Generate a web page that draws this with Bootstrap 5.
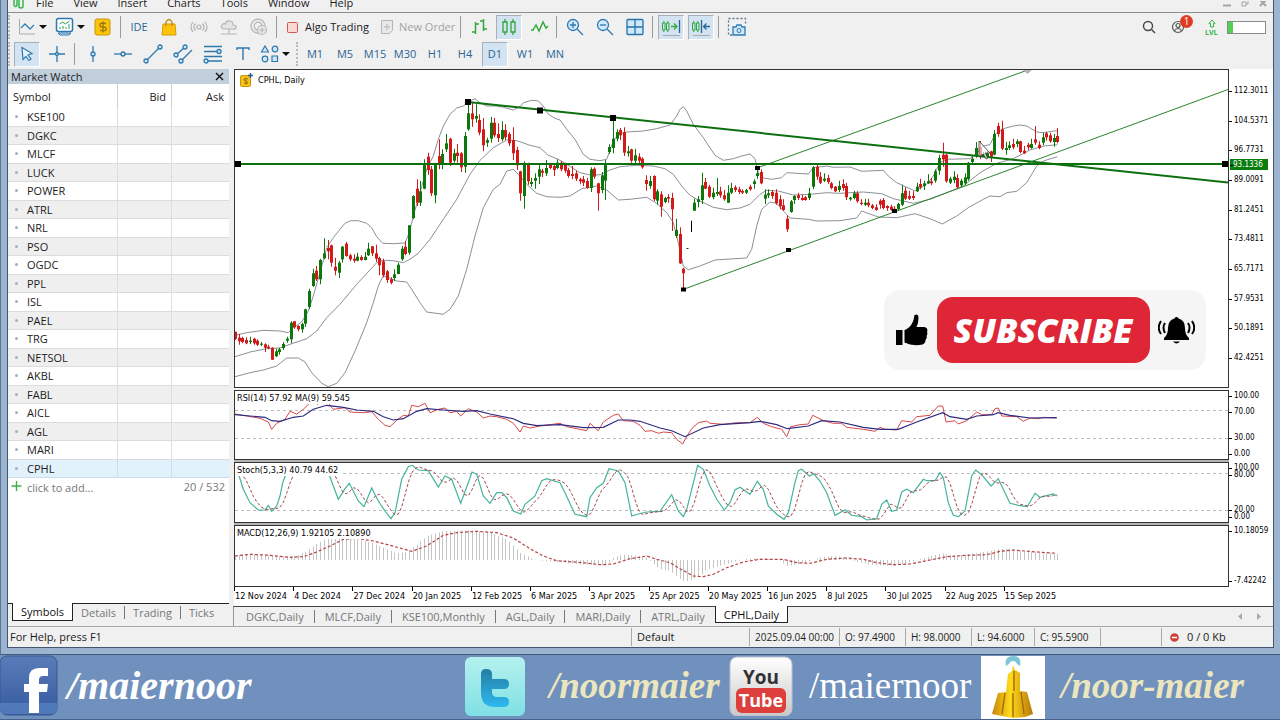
<!DOCTYPE html>
<html lang="en">
<head>
<meta charset="utf-8">
<meta name="viewport" content="width=device-width, initial-scale=1">
<title>CPHL, Daily</title>
<link href="https://cdn.jsdelivr.net/npm/bootstrap@5.3.0/dist/css/bootstrap.min.css" rel="stylesheet">
<style>
  body { background: #7091bd; font: 11px/16px "Open Sans", "Noto Sans", sans-serif; color: #1c1c1c; }
  button { font: inherit; color: inherit; background: none; border: 0; padding: 0; }
  a { color: inherit; text-decoration: none; }
  svg { display: block; }
  .frame { background: #9db4d0; padding: 0 6px 6px; border-left: 1px solid #5c7596; border-bottom: 1px solid #41597a; }
  .app { background: #f0f0f0; border: 1px solid #44566e; border-top: 0; }
  .menubar { height: 13px; border-bottom: 1px solid #8e8e8e; padding-left: 4px; }
  .menubar a { line-height: 20px; height: 19px; }
  .menus { gap: 20px; padding-left: 12px; }
  .wincontrols { gap: 10px; padding-right: 6px; color: #a0a0a0; }
  .tools { gap: 4px; height: 28px; }
  .tools.second { height: 28px; padding-bottom: 2px; }
  .grip { width: 2px; height: 24px; border-left: 2px dotted #b9b9b9; }
  .rule { width: 1px; height: 22px; margin: 0 1px 0 0; background: #9a9a9a; }
  .tool { width: 26px; height: 25px; display: flex; align-items: center; justify-content: center; color: #2a6596; flex: none; }
  .tool.drop { width: 34px; justify-content: flex-start; padding-left: 3px; gap: 2px; }
  .tool.drop.tight { width: 32px; padding-left: 0; }
  .tool.on { background: #d3e3f1; border: 1px solid #fff; border-top-color: #a6b0ba; border-left-color: #a6b0ba; }
  .tool svg, .wide svg { flex: none; }
  .caret { width: 0; border: 4px solid transparent; border-top-color: #111; border-bottom: 0; }
  .wide { display: flex; align-items: center; gap: 7px; white-space: nowrap; }
  .algo { width: 88px; padding-left: 5px; }
  .order { width: 82px; padding-left: 6px; gap: 5px; color: #a3a3a3; }
  .status-tools { gap: 14px; padding-right: 7px; }
  .strength { gap: 8px; }
  .alert-dot { left: 9px; top: -4px; width: 13px; height: 13px; border-radius: 50%; background: #e03a22; color: #fff; font-size: 10px; line-height: 13px; text-align: center; }
  .level { width: 39px; height: 13px; border: 1px solid #8a8a8a; background: #fff; }
  .level i { display: block; width: 5px; height: 11px; background: #52d152; }
  .watch { width: 221px; background: #fff; flex: none; }
  .watch-head { background: #c1cedb; height: 15px; padding: 0 5px 0 3px; line-height: 15px; }
  .quotes { width: 100%; table-layout: fixed; border-collapse: separate; border-spacing: 0; }
  .quotes th { height: 24px; padding: 2px 5px 0; font-weight: 400; border-right: 1px solid #d0d0d0; }
  .quotes td { height: 19px; padding: 0 0 0 19px; line-height: 16px; border-right: 1px solid #dedede; border-bottom: 1px solid #dcdcdc; position: relative; }
  .quotes tr:nth-child(even) td { height: 18px; background: #efefef; }
  .quotes th:last-child, .quotes td:last-child { border-right: 0; }
  .quotes tbody tr.picked td { background: #e2f2fd; border-color: #c9dfee; }
  .quotes td:first-child::before { content: ""; position: absolute; left: 7px; top: 7px; width: 3px; height: 3px; border-radius: 50%; background: #a3afba; }
  .quotes .c1 { width: 110px; } .quotes .c2 { width: 54px; }
  .adder { color: #777; padding: 1px 4px 0 3px; height: 19px; }
  .side-tabs { background: #f0f0f0; border-top: 1px solid #222; height: 23px; padding-left: 4px; color: #777; }
  .side-tabs button { height: 17px; line-height: 16px; padding: 0 8px; }
  .side-tabs button + button + button { border-left: 1px solid #777; height: 13px; line-height: 12px; margin-top: 2px; }
  .side-tabs button.current { background: #fff; color: #111; border: 1px solid #222; border-top: 0; height: 18px; margin-top: -1px; }
  .chart { margin-left: 5px; background: #fff; min-width: 0; font: 9px/12px "DejaVu Sans Condensed", "DejaVu Sans", sans-serif; color: #000; }
  .plot { border: 1px solid #333; min-width: 0; position: relative; flex: 1 1 0; }
  .plot > svg { width: 100%; }
  .scale { width: 44px; flex: none; display: flex; flex-direction: column; justify-content: space-between; position: relative; font-size: 8px; }
  .scale span { padding-left: 5px; position: relative; white-space: nowrap; }
  .scale span::before { content: ""; position: absolute; left: 0; top: 6px; width: 3px; height: 1px; background: #000; }
  .scale.main { padding: 16px 0 24px; }
  .scale .now { position: absolute; left: 1px; top: 90px; width: 38px; height: 11px; line-height: 11px; background: #0b7d0f; color: #fff; padding-left: 3px; }
  .scale.rsi span:nth-child(even) { margin-top: -9px; }
  .scale .pair span + span { margin-top: -5px; }
  .pane-gap { height: 2px; margin-right: 44px; background: #b5b5b5; }
  .pane-gap.light { background: #f4f4f4; }
  .pane-title { position: absolute; left: 0; top: 1px; padding: 0 2px; background: #fff; }
  .chart-title { position: absolute; left: 5px; top: 3px; gap: 5px; white-space: nowrap; }
  .dates { height: 19px; overflow: hidden; }
  .dates span { flex: 0 0 5.7%; border-left: 1px solid #000; height: 4px; white-space: nowrap; }
  .dates b { display: block; font-weight: 400; padding-top: 3px; }
  .cta { right: 22px; bottom: 17px; width: 322px; height: 80px; border-radius: 16px; background: #f5f5f5; padding: 0 11px; }
  .cta svg { flex: none; }
  .subscribe { width: 213px; height: 66px; flex: none; border-radius: 16px; background: #de2637; color: #fff; font: italic 800 34px/66px "Open Sans", sans-serif; text-align: center; }
  .chart-tabs { margin-left: 4px; border-top: 1px solid #444; border-left: 1px solid #999; height: 20px; color: #777; background: #f0f0f0; padding-left: 2px; }
  .chart-tabs button { padding: 0 10px; height: 13px; line-height: 12px; margin-top: 3px; border-right: 1px solid #777; white-space: nowrap; }
  .chart-tabs button.nearlast { border: 0; }
  .chart-tabs button.current { height: 17px; line-height: 17px; margin-top: -1px; padding: 0 8px; background: #fff; color: #111; border: 1px solid #222; border-top: 0; }
  .work, .hint { min-width: 0; }
  .statusbar { border-top: 1px solid #a8a8a8; height: 21px; line-height: 19px; }
  .hint { padding-left: 2px; }
  .statusbar > span { border-left: 1px solid #a8a8a8; margin: 1px 0; padding-left: 5px; white-space: nowrap; flex: none; line-height: 18px; }
  .statusbar .data { font-size: 10px; }
  .w118 { width: 118px; } .w90 { width: 90px; } .w66 { width: 66px; } .w63 { width: 63px; } .w61 { width: 61px; } .w112 { width: 112px; }
  .social { display: grid; grid-template-columns: 465fr 264fr 252fr 299fr; height: 65px; border-bottom: 1px solid #47628a; }
  .social a { display: flex; gap: 16px; white-space: nowrap; font: 37px/62px "Liberation Serif", serif; color: #fff; overflow: hidden; }
  .social a.fb { gap: 9px; font-size: 40px; }
  .social a.tw { gap: 24px; }
  .social .cream { color: #ebe6bd; }
  .social svg { flex: none; }
  .heavy { font-weight: 700; font-style: italic; }
</style>
</head>
<body>
<div class="frame">
<div class="app">
  <header>
    <nav class="menubar d-flex align-items-end">
      <svg width="12" height="12" viewBox="0 0 12 12" fill="none" stroke="#35b84b" stroke-width="1.5"><path d="M2 0v5q1 3 3 0V0M7 0v7q2 2 4 0V0"/></svg>
      <div class="menus d-flex">
        <a href="#">File</a><a href="#">View</a><a href="#">Insert</a><a href="#">Charts</a><a href="#">Tools</a><a href="#">Window</a><a href="#">Help</a>
      </div>
      <div class="wincontrols d-flex ms-auto">
        <svg width="8" height="11" viewBox="0 0 8 11"><path d="M0 4.500h8" stroke="#a5a5a5" stroke-width="2"/></svg>
        <svg width="8" height="11" viewBox="0 0 8 11" fill="none" stroke="#a5a5a5"><path d="M1 1h4v4H1zM3-1h4v4H5"/></svg>
        <svg width="8" height="11" viewBox="0 0 8 11" stroke="#a5a5a5" stroke-width="2"><path d="M1-1l6 6M7-1L1 5"/></svg>
      </div>
    </nav>
    <div class="tools d-flex align-items-center">
      <i class="grip"></i>
      <button class="tool drop" aria-label="Line chart"><svg width="20" height="20" fill="none"><path d="M2.500 2v15H18" stroke="#aaa"/><path d="M4 11l4-4 5 5 4-4" stroke="#3181ba" stroke-width="1.300"/></svg><i class="caret"></i></button>
      <button class="tool drop" aria-label="Indicators"><svg width="20" height="20" fill="none" stroke="#2d79ae"><rect x="1.500" y="1.500" width="16" height="13" rx="2" fill="#fff" stroke-width="1.500"/><path d="M3 16h13l-2 2H5z" fill="#c9e6fb"/><path d="M4.500 7l3-2 3 2 4-3M5 12v-2m3 2V9m3 3v-2m3 2V7" stroke="#2c9e5a"/></svg><i class="caret"></i></button>
      <button class="tool" aria-label="Market"><svg width="20" height="20"><rect x="2" y="2" width="15" height="16" rx="2" fill="#fbc50b" stroke="#c9960c"/><path d="M13 7q-3-2-6 0-1 3 3 3t3 3q-3 2-6 0M10 4.500v11" fill="none" stroke="#9c7508" stroke-width="1.300"/></svg></button>
      <i class="rule"></i>
      <button class="tool">IDE</button>
      <button class="tool" aria-label="Store"><svg width="20" height="20"><path d="M4 7h12l1 11H3z" fill="#fcc20c" stroke="#d79a08"/><path d="M7 9V5q3-5 6 0v4" fill="none" stroke="#bd8912" stroke-width="1.300"/></svg></button>
      <button class="tool" aria-label="Signals"><svg width="20" height="20" fill="none" stroke="#b2b2b2" stroke-width="1.200"><circle cx="10" cy="10" r="2"/><path d="M6.500 6.500q-3 3.500 0 7M13.500 6.500q3 3.500 0 7M4 5q-4 5 0 10M16 5q4 5 0 10"/></svg></button>
      <button class="tool" aria-label="Cloud"><svg width="20" height="20" fill="#e3e3e3" stroke="#b5b5b5" stroke-width="1.200"><path d="M5 12q-4-1-2-4 1-2 3-1 1-4 5-3 3 0 3 4 4 0 3 3-1 2-3 1zM10 12v5M2 17h16"/></svg></button>
      <button class="tool" aria-label="Network"><svg width="20" height="20" fill="none" stroke="#b5b5b5" stroke-width="1.200"><path d="M10 16a7 7 0 1 1 6-7M8 13a4 4 0 1 1 5-5"/><circle cx="13" cy="13" r="4.500" fill="#e9e9e9"/><path d="M13 10.500v5M10.500 13h5"/></svg></button>
      <i class="rule"></i>
      <button class="wide algo"><svg width="11" height="11"><rect x=".5" y=".5" width="10" height="10" rx="1" fill="#fbd8d4" stroke="#cf5a50"/></svg>Algo Trading</button>
      <button class="wide order"><svg width="14" height="16" fill="#e8e8e8" stroke="#b5b5b5"><path d="M1.500 1.500h11v10l-3 3h-8zM7 5v6M4 8h6"/></svg>New Order</button>
      <i class="rule"></i>
      <button class="tool" aria-label="Bar chart"><svg width="20" height="20" fill="none" stroke="#2fa83a" stroke-width="1.500"><path d="M6.500 5v12M3 15h3.500M6.500 7H10M14.500 2v12M11 4h3.500M14.500 12H18"/></svg></button>
      <button class="tool on" aria-label="Candles"><svg width="20" height="20" fill="none" stroke="#2fa83a" stroke-width="1.300"><path d="M4 5h4v10H4zM6 2v3m0 10v3M12 5h4v10h-4zM14 2v3m0 10v3"/></svg></button>
      <button class="tool" aria-label="Line"><svg width="20" height="20" fill="none" stroke="#2fa83a" stroke-width="1.400"><path d="M2 13l2 0 3-5 3 6 4-9 3 6 2-2"/></svg></button>
      <i class="rule"></i>
      <button class="tool" aria-label="Zoom in"><svg width="20" height="20" fill="#cfe9fb" stroke="#2d79ae" stroke-width="1.300"><path d="M12 12l6 6"/><circle cx="8" cy="8" r="5.500"/><path d="M8 5v6M5 8h6"/></svg></button>
      <button class="tool" aria-label="Zoom out"><svg width="20" height="20" fill="#cfe9fb" stroke="#2d79ae" stroke-width="1.300"><path d="M12 12l6 6"/><circle cx="8" cy="8" r="5.500"/><path d="M5 8h6"/></svg></button>
      <button class="tool" aria-label="Tile"><svg width="20" height="20" fill="#cfe9fb" stroke="#2472a8" stroke-width="1.300"><rect x="2" y="2.500" width="16" height="15" rx="1"/><path d="M10 2.500v15M2 10h16"/></svg></button>
      <i class="rule"></i>
      <button class="tool on" aria-label="Auto scroll"><svg width="20" height="20" fill="none"><path d="M1.500 6h2.500v7H1.500zM2.800 4v2m0 7v2M5.500 6h2.500v7H5.500zM6.800 4v2m0 7v2" stroke="#2fa83a"/><path d="M10 9.500h6M13 6.500l3 3-3 3" stroke="#2fa83a" stroke-width="1.300"/><path d="M18.500 3v13" stroke="#27659b" stroke-width="1.300"/><path d="M2 18.500h17" stroke="#aaa"/></svg></button>
      <button class="tool on" aria-label="Chart shift"><svg width="20" height="20" fill="none"><path d="M1.500 6h2.500v7H1.500zM2.800 4v2m0 7v2M5.500 6h2.500v7H5.500zM6.800 4v2m0 7v2" stroke="#2fa83a"/><path d="M10.500 3v13M12.500 9.500H19M15.500 6.500l-3 3 3 3" stroke="#27659b" stroke-width="1.300"/><path d="M2 18.500h17" stroke="#aaa"/></svg></button>
      <i class="rule"></i>
      <button class="tool" aria-label="Screenshot"><svg width="20" height="20" fill="none"><path d="M5 18H1.500V1.500h17V8" stroke="#51738f" stroke-dasharray="2 2" stroke-width="1.300"/><path d="M6 10h3l1-2h4l1 2h3v8H6z" fill="#cfe9fb" stroke="#2d79ae" stroke-width="1.300"/><circle cx="12" cy="13.500" r="2" stroke="#2d79ae"/></svg></button>
      <div class="status-tools d-flex align-items-center ms-auto">
        <button aria-label="Search"><svg width="16" height="16" fill="none" stroke="#444" stroke-width="1.400"><circle cx="7" cy="7" r="4.500"/><path d="M10.500 10.500L14 14"/></svg></button>
        <button class="position-relative" aria-label="Account, 1 message"><svg width="16" height="16" fill="none" stroke="#555" stroke-width="1.200"><circle cx="7" cy="8" r="5.500"/><circle cx="7" cy="6.500" r="2"/><path d="M3 12q4-5 8 0"/></svg><span class="alert-dot position-absolute">1</span></button>
        <div class="strength d-flex align-items-center ms-1"><svg width="14" height="18"><path d="M7 2l3 3.500H8.500V9h-3V5.500H4z" fill="none" stroke="#35b84b"/><text x="0" y="17" font-size="7" font-weight="700" fill="#35b84b">LVL</text></svg>
        <div class="level"><i></i></div></div>
      </div>
    </div>
    <div class="tools second d-flex align-items-center">
      <i class="grip"></i>
      <button class="tool on" aria-label="Cursor"><svg width="20" height="20"><path d="M5 3.500l10 6-4 1.500 3 4-2 1.500-3-4-3 3z" fill="#e9f5fd" stroke="#2d79ae" stroke-width="1.200"/></svg></button>
      <button class="tool" aria-label="Crosshair"><svg width="20" height="20" fill="none" stroke="#2d79ae" stroke-width="1.300"><path d="M10 2v16M2 10h16"/><circle cx="10" cy="10" r="1.500" fill="#cfe9fb"/></svg></button>
      <i class="rule"></i>
      <button class="tool" aria-label="Vertical line"><svg width="20" height="20" fill="#cfe9fb" stroke="#2d79ae" stroke-width="1.300"><path d="M10 2v16"/><circle cx="10" cy="10" r="2"/></svg></button>
      <button class="tool" aria-label="Horizontal line"><svg width="20" height="20" fill="#cfe9fb" stroke="#2d79ae" stroke-width="1.300"><path d="M1 10h18"/><circle cx="10" cy="10" r="2"/></svg></button>
      <button class="tool" aria-label="Trend line"><svg width="20" height="20" fill="#cfe9fb" stroke="#2d79ae" stroke-width="1.300"><path d="M3 17L17 3"/><circle cx="3" cy="17" r="2"/><circle cx="17" cy="3" r="2"/></svg></button>
      <button class="tool" aria-label="Channel"><svg width="20" height="20" fill="#cfe9fb" stroke="#2d79ae" stroke-width="1.300"><path d="M3 11L12 3M8 17L19 6"/><circle cx="3" cy="11" r="2"/><circle cx="12" cy="3" r="2"/><circle cx="8" cy="17" r="2"/></svg></button>
      <button class="tool" aria-label="Fibonacci"><svg width="20" height="20" fill="#cfe9fb" stroke="#2d79ae" stroke-width="1.300"><path d="M1 2.500h18M1 7.500h16M1 12.500h18M4 17h15"/><circle cx="16" cy="7.500" r="2"/><circle cx="3" cy="17" r="2"/></svg></button>
      <button class="tool" aria-label="Text"><svg width="20" height="20" fill="none" stroke="#2d79ae" stroke-width="1.400"><path d="M4 6V4h12v2M10 4v12"/></svg></button>
      <button class="tool drop tight" aria-label="Shapes"><svg width="20" height="20" fill="#cfe9fb" stroke="#2d79ae" stroke-width="1.200"><path d="M5 2l3.500 6h-7zM12 12h5.500v5.500H12z"/><circle cx="15" cy="5" r="2.800"/><circle cx="5" cy="15" r="2.800"/></svg><i class="caret"></i></button>
      <i class="grip"></i>
      <button class="tool">M1</button><button class="tool">M5</button><button class="tool">M15</button><button class="tool">M30</button><button class="tool">H1</button><button class="tool">H4</button><button class="tool on">D1</button><button class="tool">W1</button><button class="tool">MN</button>
    </div>
  </header>

  <div class="d-flex">
    <aside class="watch d-flex flex-column">
      <div class="watch-head d-flex justify-content-between align-items-center">Market Watch
        <button aria-label="Close"><svg width="9" height="9" stroke="#111" stroke-width="1.400"><path d="M1 1l7 7M8 1L1 8"/></svg></button></div>
      <table class="quotes">
        <thead><tr><th class="c1">Symbol</th><th class="c2 text-end">Bid</th><th class="text-end">Ask</th></tr></thead>
        <tbody id="symbols"></tbody>
      </table>
      <div class="adder d-flex justify-content-between">
        <span class="d-flex gap-1"><svg width="12" height="14" stroke="#3fae49" stroke-width="1.400"><path d="M5.500 2v10M.5 7h10"/></svg><button>click to add...</button></span><span>20 / 532</span></div>
      <div class="side-tabs d-flex mt-auto"><button class="current">Symbols</button><button>Details</button><button>Trading</button><button>Ticks</button></div>
    </aside>

    <main class="work flex-grow-1 d-flex flex-column">
      <section class="chart">
        <div class="d-flex">
          <div class="plot">
            <svg id="price" viewBox="0 0 993 317" height="317" preserveAspectRatio="none"></svg>
            <div class="chart-title d-flex align-items-center">
              <svg width="13" height="14"><rect x=".5" y="2.500" width="10" height="11" rx="1" fill="#f8c21a" stroke="#c8960f"/><path d="M8 6q-3-1-4 0t1.500 2T8 10q-2 1-4 0M6 4.500v7" fill="none" stroke="#9c7508"/><path d="M10.500 0v5M8 2.500h5" stroke="#215f94" stroke-width="1.400"/></svg>CPHL, Daily</div>
            <div class="cta position-absolute d-flex align-items-center justify-content-between">
              <svg width="33" height="34" viewBox="0 0 33 34"><path d="M1 17h6.500v15H1zM9.500 17c4-1 8-6 9-10l1-5q4-2 4 3 0 5-2 9h8q4 1 2.500 5 1 2-.5 4 1 2-1 4 0 3-3 4.500-10 2-18-2z"/></svg>
              <button class="subscribe">SUBSCRIBE</button>
              <svg width="37" height="30" viewBox="0 0 37 30"><path d="M18.500 2q2 0 2 1.500Q27 5 27 13q0 7 4 10v2H6v-2q4-3 4-10 0-8 6.500-9.500Q16.500 2 18.500 2zM15 26.500h7q-3.500 4-7 0z"/><path d="M7 8q-3 4.500 0 10M3 6q-4.500 7 0 13M30 8q3 4.500 0 10M34 6q4.500 7 0 13" fill="none" stroke="#000" stroke-width="2"/></svg>
            </div>
          </div>
          <div class="scale main"><span>112.3011</span><span>104.5371</span><span>96.7731</span><span>89.0091</span><span>81.2451</span><span>73.4811</span><span>65.7171</span><span>57.9531</span><span>50.1891</span><span>42.4251</span><span class="now">93.1336</span></div>
        </div>
        <div class="pane-gap light"></div>
        <div class="d-flex">
          <div class="plot"><svg id="rsi" viewBox="0 0 993 68" height="68" preserveAspectRatio="none"></svg><span class="pane-title">RSI(14) 57.92 MA(9) 59.545</span></div>
          <div class="scale rsi"><span>100.00</span><span>70.00</span><span>30.00</span><span>0.00</span></div>
        </div>
        <div class="pane-gap"></div>
        <div class="d-flex">
          <div class="plot"><svg id="stoch" viewBox="0 0 993 59" height="59" preserveAspectRatio="none"></svg><span class="pane-title">Stoch(5,3,3) 40.79 44.62</span></div>
          <div class="scale"><div class="pair d-flex flex-column"><span>100.00</span><span>80.00</span></div><div class="pair d-flex flex-column"><span>20.00</span><span>0.00</span></div></div>
        </div>
        <div class="pane-gap"></div>
        <div class="d-flex">
          <div class="plot"><svg id="macd" viewBox="0 0 993 60" height="60" preserveAspectRatio="none"></svg><span class="pane-title">MACD(12,26,9) 1.92105 2.10890</span></div>
          <div class="scale"><span>10.18059</span><span>-7.42242</span></div>
        </div>
        <div class="dates d-flex" id="dates"></div>
      </section>
      <div class="chart-tabs d-flex">
        <button>DGKC,Daily</button><button>MLCF,Daily</button><button>KSE100,Monthly</button><button>AGL,Daily</button><button>MARI,Daily</button><button class="nearlast">ATRL,Daily</button><button class="current">CPHL,Daily</button>
        <svg class="ms-auto me-2" width="28" height="19" fill="#aaa"><path d="M5 6v7L1 9.500zM20 6v7l4-3.500z"/></svg>
      </div>
    </main>
  </div>
  <footer class="statusbar d-flex">
    <div class="hint flex-grow-1 text-truncate">For Help, press F1</div>
    <span class="w118">Default</span><span class="data w90">2025.09.04 00:00</span><span class="data w66">O: 97.4900</span><span class="data w66">H: 98.0000</span><span class="data w63">L: 94.6000</span><span class="data w66">C: 95.5900</span><span class="w61"></span>
    <span class="w112 d-flex align-items-center gap-2 ps-2"><svg width="9" height="9"><circle cx="4.500" cy="4.500" r="4.300" fill="#cf3f3c"/><path d="M2 4.500h5" stroke="#fff" stroke-width="1.500"/></svg>0 / 0 Kb</span>
  </footer>
</div>
</div>

<section class="social">
  <a class="fb" href="#"><svg width="58" height="61" viewBox="0 0 58 61"><defs><linearGradient id="fb" x2="0" y2="1"><stop offset="0" stop-color="#5a7cb9"/><stop offset="1" stop-color="#355a9f"/></linearGradient></defs><rect x="0" y="1" width="57" height="59" rx="7" fill="url(#fb)" stroke="#38588c"/><path d="M0 48h57v6q0 5-6 5H5q-5 0-5-5z" fill="#5a86c5" opacity=".7"/><path d="M29 58V37h-5v-8h5v-6q0-10 10-10h9v8h-5q-4 0-4 4v4h9l-1 8h-8v21z" fill="#fff"/></svg><span class="heavy">/maiernoor</span></a>
  <a class="tw cream" href="#"><svg width="60" height="61" viewBox="0 0 60 61"><defs><linearGradient id="tw" x2="0" y2="1"><stop offset="0" stop-color="#b5f1ef"/><stop offset="1" stop-color="#7fe0e4"/></linearGradient><linearGradient id="tt" x2="0" y2="1"><stop offset="0" stop-color="#247da5"/><stop offset="1" stop-color="#2eb9ee"/></linearGradient></defs><rect x="0" y="2" width="60" height="59" rx="6" fill="url(#tw)"/><path d="M16 19q0-5 5-5 6 0 6 5v5h12q5 0 5 5t-5 5H27v3q0 5 5 5h7q5 0 5 5t-5 5h-9q-14 0-14-14z" fill="url(#tt)"/></svg><span class="heavy">/noormaier</span></a>
  <a href="#"><svg width="64" height="61" viewBox="0 0 64 61"><defs><linearGradient id="yt" x2="0" y2="1"><stop offset="0" stop-color="#fff"/><stop offset="1" stop-color="#c9c9c9"/></linearGradient></defs><rect x="1" y="2" width="62" height="59" rx="7" fill="url(#yt)" stroke="#b9c0cc"/><rect x="7" y="33" width="50" height="25" rx="6" fill="#dd403c"/><text x="32" y="29" text-anchor="middle" font-family="Open Sans, sans-serif" font-size="19" font-weight="700" fill="#333">You</text><text x="32" y="52" text-anchor="middle" font-family="Open Sans, sans-serif" font-size="18" font-weight="700" fill="#fff">Tube</text></svg><span>/maiernoor</span></a>
  <a class="cream" href="#"><svg width="64" height="64" viewBox="0 0 64 64"><defs><linearGradient id="au"><stop offset="0" stop-color="#c78408"/><stop offset=".45" stop-color="#ffdc1a"/><stop offset="1" stop-color="#b8770a"/></linearGradient></defs><path fill="#fff" d="M0 1h64v63H0z"/><path d="M25 11q-2-10 7-10t7 10l-3-2q-1-3-4-3t-4 3z" fill="#7cc4d6"/><path d="M32 10l2 5 5 3v18l7 1 6 22-8 3-12 1-11-2-10-2 6-21 8-1 2-18 4-3z" fill="url(#au)"/><path d="M32 38v24M24 38l-3 21M40 37l3 22M33 16v20" stroke="#a96c06" stroke-width="1.500"/></svg><span class="heavy">/noor-maier</span></a>
</section>

<script src="https://cdn.jsdelivr.net/npm/bootstrap@5.3.0/dist/js/bootstrap.bundle.min.js"></script>
<script>
document.getElementById('symbols').innerHTML = 'KSE100 DGKC MLCF LUCK POWER ATRL NRL PSO OGDC PPL ISL PAEL TRG NETSOL AKBL FABL AICL AGL MARI CPHL'
  .split(' ').map(s => `<tr class="${s === 'CPHL' ? 'picked' : ''}"><td>${s}</td><td></td><td></td></tr>`).join('');
const days = ['12 Nov 2024','4 Dec 2024','27 Dec 2024','20 Jan 2025','12 Feb 2025','6 Mar 2025','3 Apr 2025','25 Apr 2025','20 May 2025','16 Jun 2025','8 Jul 2025','30 Jul 2025','22 Aug 2025','15 Sep 2025'];
document.getElementById('dates').innerHTML = days.map(d => `<span><b>${d}</b></span>`).join('');

// Series are stored in thirds of a plot unit; each pane has its own vertical origin.
const STEP = 11.113;
const pts = s => s.trim().split(/\s+/).map(p => p.split(',').map(Number));
const line = (a, top) => 'M' + a.map(([x, y]) => (x / 3 - 5).toFixed(1) + ' ' + (y / 3 - top).toFixed(1)).join('L');
const at = (a, x) => {
  if (x <= a[0][0]) return a[0][1];
  for (let i = 1; i < a.length; i++) if (x <= a[i][0]) {
    const [x0, y0] = a[i - 1], [x1, y1] = a[i];
    return y0 + (y1 - y0) * (x - x0) / (x1 - x0);
  }
  return a[a.length - 1][1];
};
const path = (d, stroke, extra = '') => `<path d="${d}" fill="none" stroke="${stroke}" ${extra}/>`;

// high, open/close top, open/close bottom, low, rising (g) or falling (r)
const bars = `797 797 818 822r 804 815 826 836r 812 816 828 832r 814 822 832 835r 812 824 828 834g 815 818 832 836r 820 824 836 840r 828 833 836 840g 832 835 845 858r 836 842 846 850r
844 845 881 882r 848 856 871 873g 845 850 858 866g 828 834 846 852g 812 818 824 830g 766 770 820 832g 766 766 784 788r 778 780 790 796r 770 774 790 800g 728 730 773 783g
668 675 723 730g 608 622 660 662g 600 614 640 645r 578 582 640 655g 517 562 577 580g 522 546 556 580r 536 538 590 602r 575 602 614 628r 585 590 620 636g 540 542 580 590g
528 533 570 572r 563 568 580 586r 565 578 584 590r 560 572 584 586g 568 573 582 584r 558 572 582 583g 530 548 568 570g 540 541 562 570r 536 562 578 588r 572 576 598 628r
578 586 628 634r 612 616 642 650r 634 640 650 655r 610 625 636 645g 590 596 624 625g 540 548 580 584g 525 542 564 568r 478 478 560 566g 388 390 456 460g 340 368 410 420r
345 376 410 420g 280 292 368 370g 260 272 312 326r 300 310 382 390r 290 292 388 412g 220 270 292 310r 250 264 294 310g 204 232 250 258g 215 218 290 300r 248 262 284 290g
234 260 270 290r 258 262 304 318r 198 210 302 320g 110 142 190 194g 108 142 160 182r 115 150 158 170g 145 162 200 208r 156 190 238 256r 215 222 230 242g 153 170 218 230g
156 170 208 214r 172 204 216 228r 166 192 220 226g 175 192 214 222r 198 204 232 240r 184 222 262 282r 242 252 298 312r 314 316 382 404r 286 292 390 428g 290 292 346 356r
335 348 354 362g 322 336 344 368g 296 310 332 354g 308 314 320 334r 282 306 322 330g 290 292 306 310r 294 300 312 330r 280 290 306 310g 285 290 310 316r 290 296 314 320r
305 312 330 335r 300 324 330 340r 315 322 338 345r 335 340 346 355r 330 340 350 360r 335 345 366 368r 304 310 366 378g 304 308 332 338r 350 352 382 434r 318 328 372 382g
282 292 344 402g 235 243 258 264g 160 218 246 262g 190 198 218 226g 186 192 208 222r 184 198 260 270r 240 256 262 272g 248 250 284 290r 248 268 284 292g 262 272 284 292r
274 278 304 308r 328 342 354 374r 330 345 360 368g 328 330 400 405r 370 376 404 416g 376 385 422 452r 392 396 408 412g 385 393 398 410r 380 396 430 495r 458 492 510 516g
484 504 592 594r 605 608 622 670r 547 547 548 549k 464 480 480 498k 398 410 434 435g 390 400 408 424g 320 358 402 414g 336 348 368 370r 356 362 392 396r 365 380 394 400g
336 378 384 390g 362 376 388 395r 372 388 400 404r 358 380 410 411g 350 366 380 384g 358 364 372 378r 362 370 378 384r 370 375 380 384r 368 372 380 384g 356 362 370 374r
340 346 354 368g 310 322 330 338g 310 318 352 355r 370 386 398 414g 370 382 388 396g 372 378 390 398r 370 380 412 416r 388 400 420 430r 400 418 432 434r 448 458 490 498r
402 406 438 440g 388 390 402 414g 380 388 396 402r 386 396 402 404r 390 394 402 404r 365 382 396 402g 300 304 362 370g 296 302 332 342r 318 332 350 354r 322 338 344 348g
326 336 348 354r 348 352 366 370r 360 362 376 378r 344 360 372 378g 340 354 366 374r 350 360 394 402r 392 395 400 404g 374 382 396 400g 376 382 406 410r 400 410 414 418r
398 410 416 420g 398 410 418 424r 414 418 426 430r 415 424 432 434r 400 404 416 428r 396 402 426 430r 418 420 426 434r 416 422 432 434r 420 428 434 436r 410 414 430 434g
356 382 416 420g 364 374 398 402r 374 390 398 402r 376 390 396 402r 350 362 376 378g 338 354 364 370r 344 352 360 372g 325 346 352 354g 336 346 352 358r 310 316 344 350g
266 276 314 326g 230 266 280 302r 264 266 346 350r 332 338 350 354g 316 332 342 352g 325 336 364 366r 338 344 358 364g 322 334 352 358g 288 290 340 344g 270 278 288 292g
228 246 270 275g 225 244 272 280r 258 264 272 274g 255 262 272 276g 254 256 272 288r 192 204 266 268g 170 180 204 212r 164 190 248 252r 228 246 252 266g 226 238 246 252g
218 234 244 250r 220 226 234 244g 224 226 258 262r 240 254 262 264r 230 236 244 252r 218 234 246 248g 180 220 230 236r 226 236 246 250r 200 214 230 238g 198 202 214 224r
200 208 226 230r 204 216 228 242g 186 210 228 232r`.match(/\d+ \d+ \d+ \d+[grk]/g);

const upper = pts(`15,808 50,800 100,793 150,795 175,800 190,785 215,768 235,735 250,690 270,620 290,545 310,515 330,490 345,472 362,464 385,464 410,472 425,485 440,512 458,532 490,533 525,531 538,500 550,450 570,380 590,310 610,270 625,220 640,180 660,145 680,126 700,120 720,105 735,98 750,110 770,120 800,120 820,124 850,132 870,122 880,110 905,103 925,105 940,120 955,145 975,157 990,162 1010,190 1035,220 1060,265 1080,280 1110,284 1130,280 1150,225 1165,205 1190,198 1240,195 1280,188 1320,177 1340,150 1350,130 1360,122 1370,135 1390,175 1420,215 1455,268 1480,283 1510,278 1535,270 1560,264 1575,278 1585,320 1600,336 1625,340 1655,335 1670,320 1735,324 1750,305 1790,300 1810,304 1860,303 1895,316 1960,313 1975,330 2000,350 2055,375 2090,355 2110,330 2130,290 2150,280 2220,278 2240,262 2260,240 2280,236 2295,205 2320,188 2350,180 2370,177 2390,180 2420,198 2440,200 2465,196 2482,194`);
const middle = pts(`15,872 60,858 110,848 150,846 180,835 230,818 260,795 290,755 330,715 380,655 440,590 460,583 490,584 520,590 540,580 565,562 600,520 640,460 680,400 720,325 750,283 790,245 830,222 860,224 900,238 930,245 955,268 985,280 1010,295 1050,320 1085,328 1110,326 1140,312 1170,302 1220,298 1270,300 1305,308 1330,325 1355,360 1380,388 1410,405 1450,424 1490,431 1530,426 1560,415 1590,385 1610,373 1645,375 1690,387 1740,385 1790,380 1830,382 1900,378 1955,383 1990,398 2050,412 2100,400 2150,380 2200,360 2250,320 2300,292 2350,278 2400,252 2440,240 2482,236`);
const lower = pts(`15,932 60,920 100,912 140,900 170,876 205,876 225,888 245,920 275,952 295,962 320,952 345,920 375,855 410,770 430,710 445,660 458,632 470,632 500,645 530,648 545,670 570,710 590,738 640,745 660,730 685,690 710,610 735,510 760,425 790,370 810,355 830,315 850,310 865,325 890,355 920,382 950,392 990,394 1020,390 1055,368 1100,360 1130,372 1165,402 1200,400 1250,394 1280,412 1310,440 1330,470 1345,530 1360,600 1375,611 1410,600 1455,582 1500,579 1550,576 1565,550 1580,480 1595,430 1620,408 1640,412 1665,440 1680,456 1735,460 1760,465 1830,464 1880,456 1895,435 1925,446 1945,453 2000,455 2055,443 2100,458 2137,474 2180,450 2215,425 2260,400 2280,390 2310,392 2330,380 2360,376 2390,350 2420,300 2440,285 2482,272`);

let price = [upper, middle, lower].map(b => path(line(b, 4), '#8b9098')).join('');
const ink = { g: '#0c780c', r: '#d21a1a', k: '#000' };
bars.forEach((b, i) => {
  const [h, t, bt, l] = b.split(' ').map(v => parseInt(v) / 3 - 4), c = ink[b.slice(-1)], x = Math.round(STEP * i / 3);
  price += `<path d="M${x} ${h.toFixed(1)}h1V${l.toFixed(1)}h-1z" fill="${c}"/>`;
  price += `<path d="M${x - 1} ${t.toFixed(1)}h3V${bt.toFixed(1)}h-3z" fill="${c}"/>`;
});
price += path('M448 219.500L993 19.500M522 98L790 1', '#2b852b');
price += path('M0 94H993M233 32L993 112.500', '#0c700f', 'stroke-width="2"');
[[3, 94], [990, 94], [233, 32], [305, 40.5], [378, 48]].forEach(([x, y]) => price += `<rect x="${x - 3}" y="${y - 3}" width="6" height="6"/>`);
[[522, 98], [448, 219.5], [553, 180], [659, 141]].forEach(([x, y]) => price += `<rect x="${x - 2}" y="${y - 2}" width="5" height="4"/>`);
price += '<path d="M744 71v16l4-3 3 5 2-1-3-5h5z" fill="#fff" fill-opacity=".6" stroke="#333" stroke-width=".8"/><path d="M788 0h9l-4.500 4z" fill="#b5b5b5"/>';
document.getElementById('price').innerHTML = price;

const level = y => path(`M0 ${y}H993`, '#bbb', 'stroke-dasharray="3 3"');
const rsi = pts(`15,84 50,90 90,97 115,108 125,130 140,112 165,100 180,76 200,84 220,70 240,50 250,40 262,55 280,40 295,50 310,70 345,65 360,78 400,80 425,77 445,100 465,118 480,122 500,103 520,88 535,90 545,58 565,62 585,52 600,80 625,70 645,66 660,80 680,76 692,90 715,68 740,78 760,96 780,90 800,92 830,100 850,112 870,138 880,120 900,126 930,120 990,112 1010,122 1070,134 1080,112 1105,134 1120,108 1150,88 1165,84 1180,104 1210,106 1230,118 1245,136 1265,134 1285,142 1300,138 1325,140 1340,160 1358,174 1368,155 1385,128 1405,110 1430,105 1440,112 1480,115 1520,110 1560,110 1582,94 1600,112 1625,122 1655,130 1670,152 1682,122 1710,116 1735,114 1748,88 1780,104 1810,112 1835,112 1850,124 1900,130 1935,136 1950,124 1965,130 2000,132 2015,104 2045,108 2060,92 2100,88 2125,60 2138,60 2148,108 2175,104 2185,114 2210,104 2240,78 2255,86 2285,86 2295,68 2305,66 2315,90 2360,92 2380,106 2400,96 2425,98 2440,94 2480,96`);
const rsiMa = pts(`15,86 60,90 105,94 125,104 150,106 190,94 220,90 250,70 290,58 340,64 380,72 430,76 460,92 490,102 520,98 560,76 590,68 640,72 700,76 740,74 780,84 850,98 880,112 920,119 990,116 1060,125 1120,124 1165,102 1200,102 1230,106 1290,126 1325,134 1365,152 1420,126 1470,116 1560,110 1590,106 1640,116 1672,128 1735,120 1775,104 1830,108 1900,124 1950,130 2005,130 2060,108 2138,80 2160,92 2210,100 2240,90 2290,86 2305,80 2340,88 2400,96 2480,95`);
document.getElementById('rsi').innerHTML = level(19.5) + level(47.5) + path(line(rsi, 5), '#d8474a') + path(line(rsiMa, 5), '#2b2b80', 'stroke-width="1.2"');

const k = pts(`15,262 25,262 40,310 60,350 85,372 105,372 115,358 125,376 140,360 150,330 158,290 168,264 200,240 280,240 298,268 325,340 345,308 358,292 385,345 402,362 425,306 445,345 465,375 483,398 495,380 515,280 535,242 547,238 565,252 595,254 625,303 645,270 665,280 692,352 715,290 726,258 740,265 760,330 780,352 800,320 815,320 830,335 850,375 872,384 885,355 915,330 935,284 950,278 990,290 1005,320 1035,385 1070,392 1080,335 1100,305 1120,292 1137,248 1165,255 1185,290 1205,390 1225,384 1250,378 1290,376 1325,326 1345,375 1360,392 1370,370 1385,310 1403,238 1420,250 1440,300 1460,340 1483,372 1500,350 1515,312 1530,304 1560,325 1582,286 1600,310 1615,360 1640,385 1662,400 1675,380 1695,290 1705,254 1715,250 1738,270 1752,264 1770,285 1790,320 1815,388 1845,372 1865,388 1895,392 1910,402 1940,398 1955,355 1970,342 1985,376 2000,372 2015,318 2030,310 2050,320 2080,280 2090,284 2115,284 2130,260 2140,275 2155,350 2170,388 2185,392 2205,375 2225,270 2237,252 2255,266 2283,300 2305,278 2320,310 2340,352 2365,358 2392,362 2415,322 2430,334 2470,324 2480,330`);
const d = bars.map((_, i) => { const x = 15 + STEP * i; return [x, (at(k, x - 8) + at(k, x - 19) + at(k, x - 30)) / 3]; });
document.getElementById('stoch').innerHTML = level(10.5) + level(47.5) + path(line(k, 77), '#45b39d', 'stroke-width="1.2"') + path(line(d, 77), '#a04a4a', 'stroke-dasharray="3 2"');

const hist = pts(`15,508 60,504 100,508 150,512 200,508 230,495 250,480 290,456 340,455 380,460 430,472 470,490 500,502 530,498 560,475 590,450 640,435 660,436 720,432 780,440 830,460 870,500 910,520 950,526 1000,530 1060,536 1130,538 1150,515 1175,506 1210,508 1250,514 1265,530 1290,550 1320,555 1350,580 1365,588 1385,580 1410,570 1430,550 1450,545 1480,536 1510,528 1550,518 1600,516 1650,524 1670,540 1700,536 1740,526 1770,514 1810,510 1850,514 1880,528 1930,538 1990,540 2030,532 2070,520 2100,510 2140,502 2170,510 2210,505 2250,500 2280,495 2310,488 2350,490 2400,498 2440,500 2482,504`);
const signal = pts(`15,510 60,505 120,508 180,514 220,512 260,498 300,480 340,460 380,457 430,465 480,478 545,496 590,480 640,448 680,440 740,436 800,440 850,456 900,488 940,510 980,524 1060,530 1110,536 1150,534 1200,518 1250,510 1280,520 1320,530 1350,548 1390,570 1420,572 1450,565 1490,545 1540,528 1590,520 1660,520 1700,530 1740,532 1790,520 1850,516 1900,520 1940,530 1990,536 2040,534 2090,524 2150,512 2210,508 2270,506 2310,496 2350,492 2420,498 2480,502`);
const sticks = bars.map((_, i) => `M${Math.round(STEP * i / 3) + .5} 34V${(at(hist, 15 + STEP * i) / 3 - 140).toFixed(1)}`).join('');
document.getElementById('macd').innerHTML = path(sticks, '#c4c4c4') + path(line(signal, 140), '#b54545', 'stroke-dasharray="3 2" stroke-width="1.2"');
</script>
</body>
</html>
